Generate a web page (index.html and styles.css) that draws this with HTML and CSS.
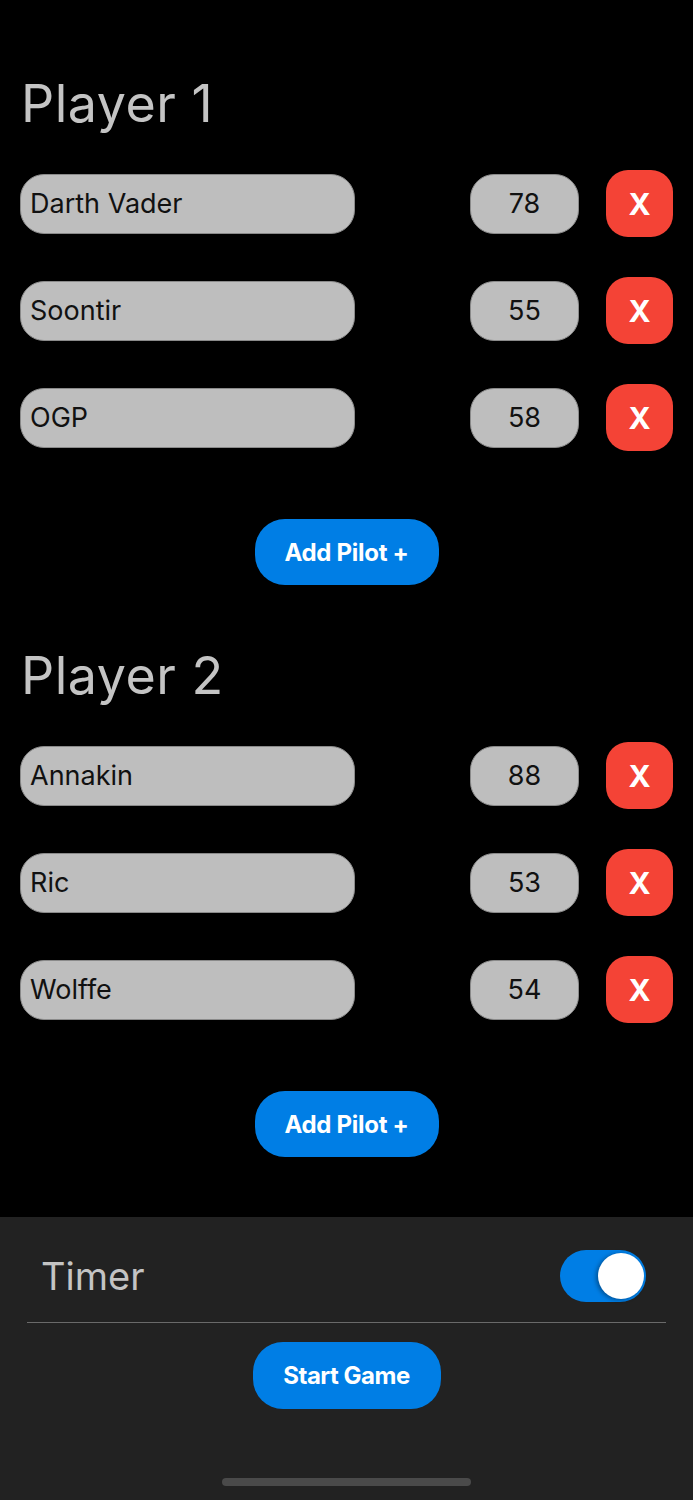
FILE: index.html
```html
<!DOCTYPE html>
<html>
<head>
<meta charset="utf-8">
<link rel="stylesheet" href="styles.css">
</head>
<body>
<main class="content">
  <section class="player">
    <h1 class="player-title">Player 1</h1>
    <div class="rows">
      <div class="row"><div class="name">Darth Vader</div><div class="score">78</div><button class="remove">X</button></div>
      <div class="row"><div class="name">Soontir</div><div class="score">55</div><button class="remove">X</button></div>
      <div class="row"><div class="name">OGP</div><div class="score">58</div><button class="remove">X</button></div>
    </div>
    <div class="add-wrap"><button class="btn add">Add Pilot +</button></div>
  </section>
  <section class="player">
    <h1 class="player-title">Player 2</h1>
    <div class="rows">
      <div class="row"><div class="name">Annakin</div><div class="score">88</div><button class="remove">X</button></div>
      <div class="row"><div class="name">Ric</div><div class="score">53</div><button class="remove">X</button></div>
      <div class="row"><div class="name">Wolffe</div><div class="score">54</div><button class="remove">X</button></div>
    </div>
    <div class="add-wrap"><button class="btn add">Add Pilot +</button></div>
  </section>
</main>
<footer class="footer">
  <div class="timer-row">
    <span class="timer-label">Timer</span>
    <div class="toggle"><div class="knob"></div></div>
  </div>
  <div class="start-wrap"><button class="btn start">Start Game</button></div>
  <div class="home-indicator"></div>
</footer>
</body>
</html>
```
FILE: styles.css
```css
html, body {
  margin: 0;
  padding: 0;
  background: #000;
  font-family: Inter, "Noto Sans", sans-serif;
}
.content {
  padding: 72px 20px 60px 20px;
}
.player + .player {
  margin-top: 59px;
}
.player-title {
  margin: 0 0 0 1px;
  font-size: 52px;
  font-weight: 400;
  line-height: 64px;
  color: #c4c4c4;
  letter-spacing: 0.5px;
}
.rows {
  margin-top: 34px;
  display: flex;
  flex-direction: column;
  gap: 40px;
}
.row {
  display: flex;
  align-items: center;
  height: 67px;
}
.name, .score {
  height: 60px;
  box-sizing: border-box;
  background: #bebebe;
  border: 1px solid #8a8a8a;
  border-radius: 24px;
  font-size: 27px;
  color: #111;
  display: flex;
  align-items: center;
}
.name {
  width: 335px;
  padding-left: 9px;
}
.score {
  width: 109px;
  margin-left: auto;
  margin-right: 27px;
  justify-content: center;
}
.remove {
  width: 67px;
  height: 67px;
  border: none;
  border-radius: 22px;
  background: #f44336;
  color: #fff;
  font-family: Inter, sans-serif;
  font-size: 30px;
  font-weight: 700;
  padding: 0;
}
.add-wrap {
  margin-top: 68px;
  display: flex;
  justify-content: center;
}
.btn {
  border: none;
  background: #007ee5;
  color: #fff;
  font-family: Inter, sans-serif;
  font-weight: 700;
  font-size: 24px;
  border-radius: 30px;
  padding: 0;
}
.add {
  width: 184px;
  height: 66px;
  letter-spacing: -0.3px;
}
.footer {
  background: #222;
  height: 283px;
  box-sizing: border-box;
  padding: 33px 27px 0 27px;
  display: flex;
  flex-direction: column;
}
.timer-row {
  display: flex;
  align-items: center;
  justify-content: space-between;
  height: 72px;
  padding: 0 20px 0 14px;
  border-bottom: 1px solid #6a6a6a;
}
.timer-label {
  font-size: 38px;
  color: #c4c4c4;
  margin-top: -20px;
}
.toggle {
  width: 86px;
  height: 52px;
  border-radius: 26px;
  background: #007ee5;
  position: relative;
  margin-top: -20px;
}
.knob {
  position: absolute;
  right: 2px;
  top: 3px;
  width: 46px;
  height: 46px;
  border-radius: 50%;
  background: #fff;
  box-shadow: -2px 1px 4px rgba(0,0,0,0.35);
}
.start-wrap {
  display: flex;
  justify-content: center;
  margin-top: 19px;
}
.start {
  width: 188px;
  height: 67px;
  letter-spacing: -0.5px;
}
.home-indicator {
  width: 249px;
  height: 8px;
  border-radius: 4px;
  background: #4a4a4a;
  margin: 69px auto 0 auto;
}
```
